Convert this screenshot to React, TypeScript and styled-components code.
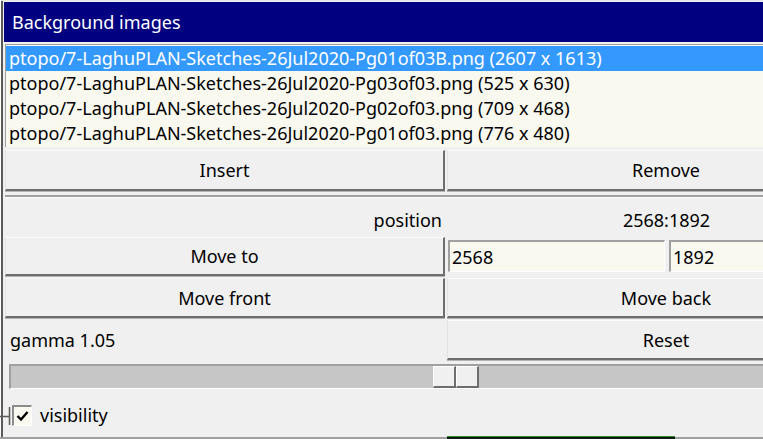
import React from 'react';
import styled, { createGlobalStyle } from 'styled-components';

const GlobalStyle = createGlobalStyle`
  html, body {
    margin: 0;
    padding: 0;
    background: #f0f0f0;
  }
  body {
    font-family: "Noto Sans", "Open Sans", sans-serif;
    font-size: 18px;
    color: #000;
  }
`;

const images = [
  'ptopo/7-LaghuPLAN-Sketches-26Jul2020-Pg01of03B.png (2607 x 1613)',
  'ptopo/7-LaghuPLAN-Sketches-26Jul2020-Pg03of03.png (525 x 630)',
  'ptopo/7-LaghuPLAN-Sketches-26Jul2020-Pg02of03.png (709 x 468)',
  'ptopo/7-LaghuPLAN-Sketches-26Jul2020-Pg01of03.png (776 x 480)',
];

const Screen = styled.div`
  width: 763px;
  height: 439px;
  overflow: hidden;
  position: relative;
  background: #f0f0f0;
`;

const Frame = styled.div`
  width: 886px;
  height: 437px;
  box-sizing: border-box;
  border-top: 1px solid #e4e4e4;
  border-left: 1px solid #fff;
  box-shadow: inset 2px 0 0 #5a5a5a;
  padding: 1px 0 0 3px;
  display: flex;
  flex-direction: column;
`;

const TitleBar = styled.div`
  height: 40px;
  background: #000080;
  color: #fff;
  display: flex;
  align-items: center;
  padding-left: 8px;
`;

const List = styled.div`
  margin: 2px 0 0 1px;
  height: 103px;
  box-sizing: border-box;
  background: #faf9f0;
  border-top: 1px solid #a0a0a0;
  border-left: 1px solid #a0a0a0;
  padding-top: 1px;
  display: flex;
  flex-direction: column;
`;

const ListRow = styled.div<{ selected?: boolean }>`
  height: 25px;
  line-height: 25px;
  padding-left: 3px;
  white-space: nowrap;
  background: ${({ selected }) => (selected ? '#3399ff' : 'transparent')};
  color: ${({ selected }) => (selected ? '#fff' : '#000')};
`;

const Columns = styled.div<{ top?: number; height: number }>`
  display: grid;
  grid-template-columns: 440px 1fr;
  column-gap: 2px;
  margin: ${({ top }) => top ?? 0}px 0 0 1px;
  height: ${({ height }) => height}px;
`;

const Button = styled.div`
  box-sizing: border-box;
  display: flex;
  align-items: center;
  justify-content: center;
  background: #f0f0f0;
  border-top: 1px solid #fbfbfb;
  border-left: 1px solid #e2e2e2;
  border-right: 2px solid #6e6e6e;
  border-bottom: 2px solid #6e6e6e;
  box-shadow: 0 1px 0 #b4b4b4;
  white-space: nowrap;
`;

const Separator = styled.div`
  margin: 4px 0 0 1px;
  height: 2px;
  background: #a0a0a0;
  border-bottom: 1px solid #fff;
`;

const Label = styled.div<{ align: 'left' | 'right' | 'center' }>`
  display: flex;
  align-items: center;
  justify-content: ${({ align }) =>
    align === 'left' ? 'flex-start' : align === 'right' ? 'flex-end' : 'center'};
  padding: ${({ align }) => (align === 'left' ? '0 0 0 5px' : align === 'right' ? '0 3px 0 0' : '0')};
  white-space: nowrap;
`;

const Inputs = styled.div`
  display: grid;
  grid-template-columns: 1fr 1fr;
  column-gap: 4px;
  padding: 3px 0 4px 1px;
`;

const Input = styled.div`
  box-sizing: border-box;
  background: #faf9f0;
  border-top: 2px solid #a0a0a0;
  border-left: 2px solid #a0a0a0;
  border-bottom: 1px solid #fff;
  border-right: 1px solid #fff;
  display: flex;
  align-items: center;
  padding-left: 2px;
`;

const Slider = styled.div`
  margin: 4px 0 0 5px;
  height: 25px;
  box-sizing: border-box;
  background: #c6c6c6;
  border-top: 2px solid #a0a0a0;
  border-left: 2px solid #a0a0a0;
  border-bottom: 1px solid #fff;
  display: flex;
  align-items: stretch;
  padding-left: 422px;
`;

const Thumb = styled.div`
  width: 23px;
  box-sizing: border-box;
  background: #f0f0f0;
  border-top: 1px solid #fff;
  border-left: 1px solid #fff;
  border-right: 2px solid #6e6e6e;
  border-bottom: 2px solid #6e6e6e;
`;

const CheckRow = styled.div`
  display: flex;
  align-items: center;
  height: 40px;
  margin-top: 6px;
  margin-left: -4px;
`;

const Connector = styled.svg`
  width: 11px;
  height: 40px;
  flex: none;
  margin-right: 1px;
`;

const CheckBox = styled.div`
  width: 20px;
  height: 21px;
  box-sizing: border-box;
  margin-right: 8px;
  background: #faf9f0;
  border-top: 2px solid #8c8c8c;
  border-left: 2px solid #8c8c8c;
  border-bottom: 1px solid #fff;
  border-right: 1px solid #fff;
  display: flex;
  align-items: center;
  justify-content: center;
`;

const Footer = styled.div`
  position: absolute;
  left: 0;
  right: 0;
  bottom: 0;
  height: 2px;
  background: #a0a0a0;
`;

const FooterBox = styled.div`
  position: absolute;
  left: 447px;
  width: 228px;
  bottom: 0;
  height: 3px;
  background: #0a1a0a;
  border-top: 1px solid #2e8b2e;
  box-sizing: border-box;
`;

export default function App() {
  return (
    <>
      <GlobalStyle />
      <Screen>
        <Frame>
          <TitleBar>Background images</TitleBar>
          <List>
            {images.map((name, i) => (
              <ListRow key={name} selected={i === 0}>
                {name}
              </ListRow>
            ))}
          </List>
          <Columns top={3} height={41}>
            <Button>Insert</Button>
            <Button>Remove</Button>
          </Columns>
          <Separator />
          <Columns top={5} height={34}>
            <Label align="right">position</Label>
            <Label align="center">2568:1892</Label>
          </Columns>
          <Columns height={39}>
            <Button>Move to</Button>
            <Inputs>
              <Input>2568</Input>
              <Input>1892</Input>
            </Inputs>
          </Columns>
          <Columns top={2} height={40}>
            <Button>Move front</Button>
            <Button>Move back</Button>
          </Columns>
          <Columns top={2} height={40}>
            <Label align="left">gamma 1.05</Label>
            <Button>Reset</Button>
          </Columns>
          <Slider>
            <Thumb />
            <Thumb />
          </Slider>
          <CheckRow>
            <Connector viewBox="0 0 11 40">
              <path d="M0 21.5H9M9.5 12V30" stroke="#5a5a5a" strokeWidth="1.5" fill="none" />
            </Connector>
            <CheckBox>
              <svg width="13" height="12" viewBox="0 0 13 12">
                <path d="M1.5 6L5 9.5L11.5 2" stroke="#000" strokeWidth="2.4" fill="none" />
              </svg>
            </CheckBox>
            <span>visibility</span>
          </CheckRow>
        </Frame>
        <Footer />
        <FooterBox />
      </Screen>
    </>
  );
}
